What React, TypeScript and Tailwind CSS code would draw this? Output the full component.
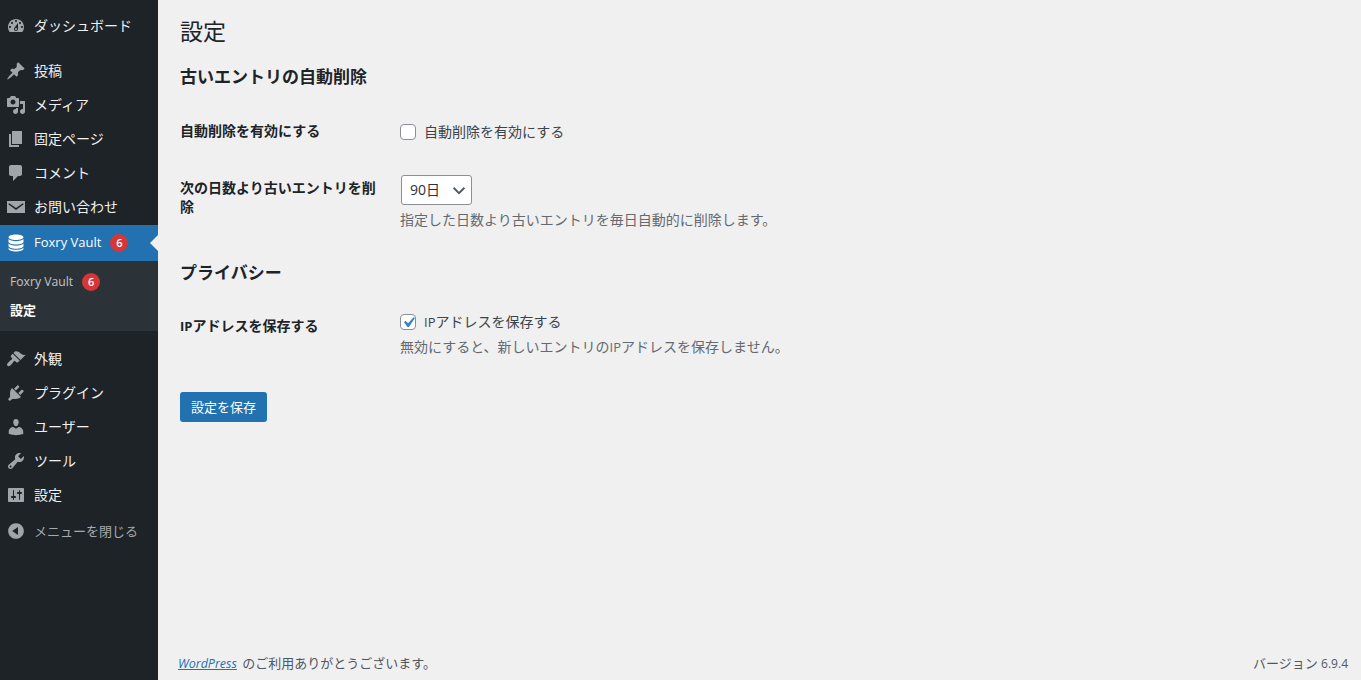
import { ReactNode } from 'react';

const icons: Record<string, ReactNode> = {
  dashboard: <path d="M3.76 16h12.48c1.1-1.37 1.76-3.11 1.76-5 0-4.42-3.58-8-8-8s-8 3.58-8 8c0 1.89.66 3.63 1.76 5zM10 4c.55 0 1 .45 1 1s-.45 1-1 1-1-.45-1-1 .45-1 1-1zM6 6c.55 0 1 .45 1 1s-.45 1-1 1-1-.45-1-1 .45-1 1-1zm8 0c.55 0 1 .45 1 1s-.45 1-1 1-1-.45-1-1 .45-1 1-1zm-5.37 5.55L12 7v6c0 1.1-.9 2-2 2s-2-.9-2-2c0-.57.24-1.08.63-1.45zM4 10c.55 0 1 .45 1 1s-.45 1-1 1-1-.45-1-1 .45-1 1-1zm12 0c.55 0 1 .45 1 1s-.45 1-1 1-1-.45-1-1 .45-1 1-1zm-5 3c0-.55-.45-1-1-1s-1 .45-1 1 .45 1 1 1 1-.45 1-1z" />,
  pin: <path d="M10.44 3.02l1.82-1.82 6.36 6.35-1.83 1.82c-1.05-.68-2.48-.57-3.41.36l-.75.75c-.92.93-1.04 2.35-.35 3.41l-1.83 1.82-2.41-2.41-2.8 2.79c-.42.42-3.38 2.71-3.8 2.29s1.86-3.39 2.28-3.81l2.79-2.79L4.1 9.36l1.83-1.82c1.05.69 2.48.57 3.4-.36l.75-.75c.93-.92 1.05-2.35.36-3.41z" />,
  media: <path d="M13 11V4c0-.55-.45-1-1-1h-1.67L9 1H5L3.67 3H2c-.55 0-1 .45-1 1v7c0 .55.45 1 1 1h10c.55 0 1-.45 1-1zM7 4.5c1.38 0 2.5 1.12 2.5 2.5S8.38 9.5 7 9.5 4.5 8.38 4.5 7 5.62 4.5 7 4.5zM14 6h5v10.5c0 1.38-1.12 2.5-2.5 2.5S14 17.88 14 16.5s1.12-2.5 2.5-2.5c.17 0 .34.02.5.05V9h-3V6zm-4 8.05V13h2v3.5c0 1.38-1.12 2.5-2.5 2.5S7 17.88 7 16.5 8.12 14 9.5 14c.17 0 .34.02.5.05z" />,
  page: <path d="M6 15V2h10v13H6zm-1 1h8v2H3V5h2v11z" />,
  comment: <path d="M5 2h9c1.1 0 2 .9 2 2v7c0 1.1-.9 2-2 2h-2l-5 5v-5H5c-1.1 0-2-.9-2-2V4c0-1.1.9-2 2-2z" />,
  mail: <path fillRule="evenodd" d="M1 4h18v12H1zM3.2 6.2l-.9 1L10 13l7.700-5.800-.9-1L10 11z" />,
  database: <path d="M10 1.500c4.100 0 7.500 1.200 7.500 2.800S14.100 7 10 7 2.500 5.900 2.500 4.300 5.900 1.500 10 1.500zM2.500 6c1.300 1.400 4.300 2.200 7.500 2.200S16.200 7.400 17.500 6v2.800c0 1.600-3.400 2.800-7.500 2.800S2.500 10.400 2.500 8.800zM2.500 10.500c1.300 1.400 4.300 2.200 7.500 2.200s6.200-.8 7.500-2.200v2.400c0 1.600-3.400 2.800-7.500 2.800s-7.500-1.200-7.500-2.800zM2.500 14.700c1.300 1.300 4.300 2.100 7.500 2.100s6.200-.8 7.500-2.100v1c0 1.600-3.400 2.800-7.500 2.800s-7.500-1.200-7.500-2.800z" />,
  brush: <path d="M14.480 11.060L7.410 3.990l1.500-1.500c.5-.56 2.300-.47 3.510.32 1.210.8 1.430 1.280 2.910 2.100 1.180.64 2.450 1.260 4.450.85zm-.71.71L6.700 4.700 4.930 6.470c-.39.39-.39 1.020 0 1.410l1.060 1.060c.39.39.39 1.030 0 1.420-.6.6-1.430 1.110-2.210 1.690-.35.26-.7.53-1.010.84-1.430 1.430-2.400 2.800-1.300 3.900s2.470.13 3.900-1.300c.31-.31.58-.66.84-1.010.58-.78 1.090-1.610 1.690-2.210.39-.39 1.030-.39 1.420 0l1.060 1.060c.39.39 1.020.39 1.410 0z" />,
  plugin: <path d="M13.110 4.360L9.870 7.600 8 5.730l3.240-3.240c.35-.34 1.050-.2 1.560.32.52.51.66 1.210.31 1.550zm-8 1.770l.91-1.120 9.010 9.010-1.190.84c-.71.71-2.630 1.160-3.820 1.160H6.140L4.900 17.260c-.59.59-1.540.59-2.120 0-.59-.58-.59-1.530 0-2.120l1.240-1.240v-3.880c0-1.130.4-3.190 1.090-3.890zm7.260 3.970l3.240-3.240c.34-.35 1.040-.21 1.550.31.52.51.66 1.210.31 1.550l-3.240 3.250z" />,
  user: <path d="M10 9.250c-2.270 0-2.730-3.440-2.730-3.440C7 4.020 7.820 2 9.970 2c2.160 0 2.980 2.020 2.710 3.810 0 0-.41 3.440-2.680 3.440zm0 2.570L12.720 10c2.390 0 4.520 2.330 4.520 4.530v2.490s-3.650 1.130-7.240 1.130c-3.650 0-7.240-1.130-7.240-1.130v-2.490c0-2.250 1.940-4.480 4.470-4.480z" />,
  tools: <path d="M16.680 9.770c-1.340 1.340-3.300 1.670-4.950.99l-5.410 6.520c-.99.99-2.590.99-3.580 0s-.99-2.590 0-3.570l6.520-5.420c-.68-1.650-.35-3.610.99-4.950 1.280-1.280 3.120-1.620 4.720-1.060l-2.890 2.890 2.820 2.820 2.860-2.870c.53 1.580.18 3.390-1.080 4.650zM3.810 16.210c.4.39 1.040.39 1.430 0 .4-.4.4-1.040 0-1.430-.39-.4-1.030-.4-1.430 0-.39.39-.39 1.030 0 1.430z" />,
  settings: <path d="M18 16V4c0-.55-.45-1-1-1H3c-.55 0-1 .45-1 1v12c0 .55.45 1 1 1h14c.55 0 1-.45 1-1zM8 11h1c.55 0 1 .45 1 1s-.45 1-1 1H8v1.500c0 .28-.22.5-.5.5s-.5-.22-.5-.5V13H6c-.55 0-1-.45-1-1s.45-1 1-1h1V5.500c0-.28.22-.5.5-.5s.5.22.5.5V11zm5-2h-1c-.55 0-1-.45-1-1s.45-1 1-1h1V5.500c0-.28.22-.5.5-.5s.5.22.5.5V7h1c.55 0 1 .45 1 1s-.45 1-1 1h-1v5.500c0 .28-.22.5-.5.5s-.5-.22-.5-.5V9z" />,
  collapse: <path fillRule="evenodd" d="M10 2.160c4.330 0 7.840 3.510 7.840 7.840s-3.510 7.840-7.840 7.840S2.160 14.330 2.160 10 5.710 2.160 10 2.160zm2 11.720V6.120L6.180 9.970z" />,
};

function Icon({ name, className }: { name: string; className?: string }) {
  return (
    <svg viewBox="0 0 20 20" fill="currentColor" className={`w-5 h-5 shrink-0 ${className ?? 'text-[#a0a5aa]'}`}>
      {icons[name]}
    </svg>
  );
}

function Badge({ className }: { className: string }) {
  return (
    <span className={`${className} w-[18px] h-[18px] rounded-full bg-[#d63638] text-white text-[11px] font-semibold leading-[18px] text-center`}>
      6
    </span>
  );
}

function MenuItem({ icon, label }: { icon: string; label: string }) {
  return (
    <div className="h-[34px] flex items-center pl-[6px] gap-[8px] text-[14px] leading-[18px] text-[#f0f0f1]">
      <Icon name={icon} />
      <span>{label}</span>
    </div>
  );
}

function Sidebar() {
  return (
    <aside className="w-[158px] shrink-0 bg-[#1d2327] pt-[9px]">
      <MenuItem icon="dashboard" label="ダッシュボード" />
      <div className="h-[11px]" />
      <MenuItem icon="pin" label="投稿" />
      <MenuItem icon="media" label="メディア" />
      <MenuItem icon="page" label="固定ページ" />
      <MenuItem icon="comment" label="コメント" />
      <MenuItem icon="mail" label="お問い合わせ" />

      <div className="relative h-[36px] mt-[1px] bg-[#2271b1] flex items-center pl-[6px] gap-[8px] text-[13px] text-white">
        <Icon name="database" className="text-white" />
        <span>Foxry Vault</span>
        <Badge className="ml-[1px]" />
        <span className="absolute right-0 top-[10px] border-y-[8px] border-r-[8px] border-y-transparent border-r-[#f0f0f1]" />
      </div>

      <div className="h-[70px] bg-[#2c3338] pt-[7px] text-[13px] leading-[18px]">
        <div className="h-[28px] pl-[10px] flex items-center text-[#c3c4c7]">
          <span className="text-[12.2px]">Foxry Vault</span>
          <Badge className="ml-[9px]" />
        </div>
        <div className="h-[28px] pl-[10px] flex items-center font-bold text-white">設定</div>
      </div>

      <div className="h-[11px]" />
      <MenuItem icon="brush" label="外観" />
      <MenuItem icon="plugin" label="プラグイン" />
      <MenuItem icon="user" label="ユーザー" />
      <MenuItem icon="tools" label="ツール" />
      <MenuItem icon="settings" label="設定" />
      <div className="h-[34px] mt-[2px] flex items-center pl-[6px] gap-[8px] text-[13px] leading-[18px] text-[#a7aaad]">
        <Icon name="collapse" />
        <span>メニューを閉じる</span>
      </div>
    </aside>
  );
}

export default function App() {
  return (
    <div className="flex h-screen overflow-hidden bg-[#f0f0f1] font-['Open_Sans','Noto_Sans_CJK_JP',sans-serif]">
      <Sidebar />
      <main className="flex-1 flex flex-col justify-between pl-[22px] pr-[13px] text-[14px] text-[#3c434a]">
        <div>
          <h1 className="mt-[16px] text-[23px] leading-[30px] font-normal text-[#1d2327]">設定</h1>
          <h2 className="mt-[19px] text-[17px] leading-[24px] font-bold text-[#1d2327]">古いエントリの自動削除</h2>

          <div className="mt-[32px] flex items-start">
            <div className="w-[220px] font-bold text-[#1d2327] leading-[20px]">自動削除を有効にする</div>
            <label className="flex items-center gap-[8px] leading-[20px]">
              <span className="w-4 h-4 rounded-[4px] border border-[#8c8f94] bg-white" />
              <span className="pt-[1px]">自動削除を有効にする</span>
            </label>
          </div>

          <div className="mt-[33px] flex items-start">
            <div className="w-[220px] pr-[14px] pt-[3px] font-bold text-[#1d2327] leading-[19px]">次の日数より古いエントリを削除</div>
            <div>
              <div className="ml-[1px] w-[71px] h-[30px] bg-white border border-[#8c8f94] rounded-[3px] pl-[8px] pr-[3px] flex items-center justify-between text-[#2c3338]">
                <span className="pb-[2px]">90日</span>
                <svg viewBox="0 0 20 20" className="w-[18px] h-[18px] text-[#50575e]" fill="none" stroke="currentColor" strokeWidth="2">
                  <path d="M4 7.500l6 6 6-6" />
                </svg>
              </div>
              <p className="mt-[5px] leading-[20px] text-[#646970]">指定した日数より古いエントリを毎日自動的に削除します。</p>
            </div>
          </div>

          <h2 className="mt-[31px] text-[17px] leading-[24px] font-bold text-[#1d2327]">プライバシー</h2>

          <div className="mt-[27px] flex items-start">
            <div className="w-[220px] pt-[4px] font-bold text-[#1d2327] leading-[20px]">
              <span className="text-[13px]">IP</span>アドレスを保存する
            </div>
            <div>
              <label className="flex items-center gap-[8px] leading-[20px]">
                <span className="w-4 h-4 rounded-[4px] border border-[#8c8f94] bg-white flex items-center justify-center overflow-hidden">
                  <svg viewBox="0 0 20 20" className="w-[21px] h-[21px] shrink-0 text-[#3582c4]" fill="currentColor">
                    <path d="M14.830 4.890l1.340.94-5.810 8.380H9.020L5.780 9.670l1.340-1.250 2.570 2.400z" />
                  </svg>
                </span>
                <span><span className="text-[13px]">IP</span>アドレスを保存する</span>
              </label>
              <p className="mt-[5px] leading-[20px] text-[#646970]">無効にすると、新しいエントリの<span className="text-[13px]">IP</span>アドレスを保存しません。</p>
            </div>
          </div>

          <button className="mt-[35px] w-[87px] h-[30px] rounded-[3px] bg-[#2271b1] text-white text-[13px] leading-[28px]">設定を保存</button>
        </div>

        <footer className="flex justify-between items-center h-[20px] mb-[6px] text-[13px] text-[#50575e]">
          <span className="-ml-[2px]">
            <a className="italic underline text-[#2271b1] text-[12.5px] mr-[2px]">WordPress</a> のご利用ありがとうございます。
          </span>
          <span>バージョン <span className="text-[12px]">6.9.4</span></span>
        </footer>
      </main>
    </div>
  );
}
